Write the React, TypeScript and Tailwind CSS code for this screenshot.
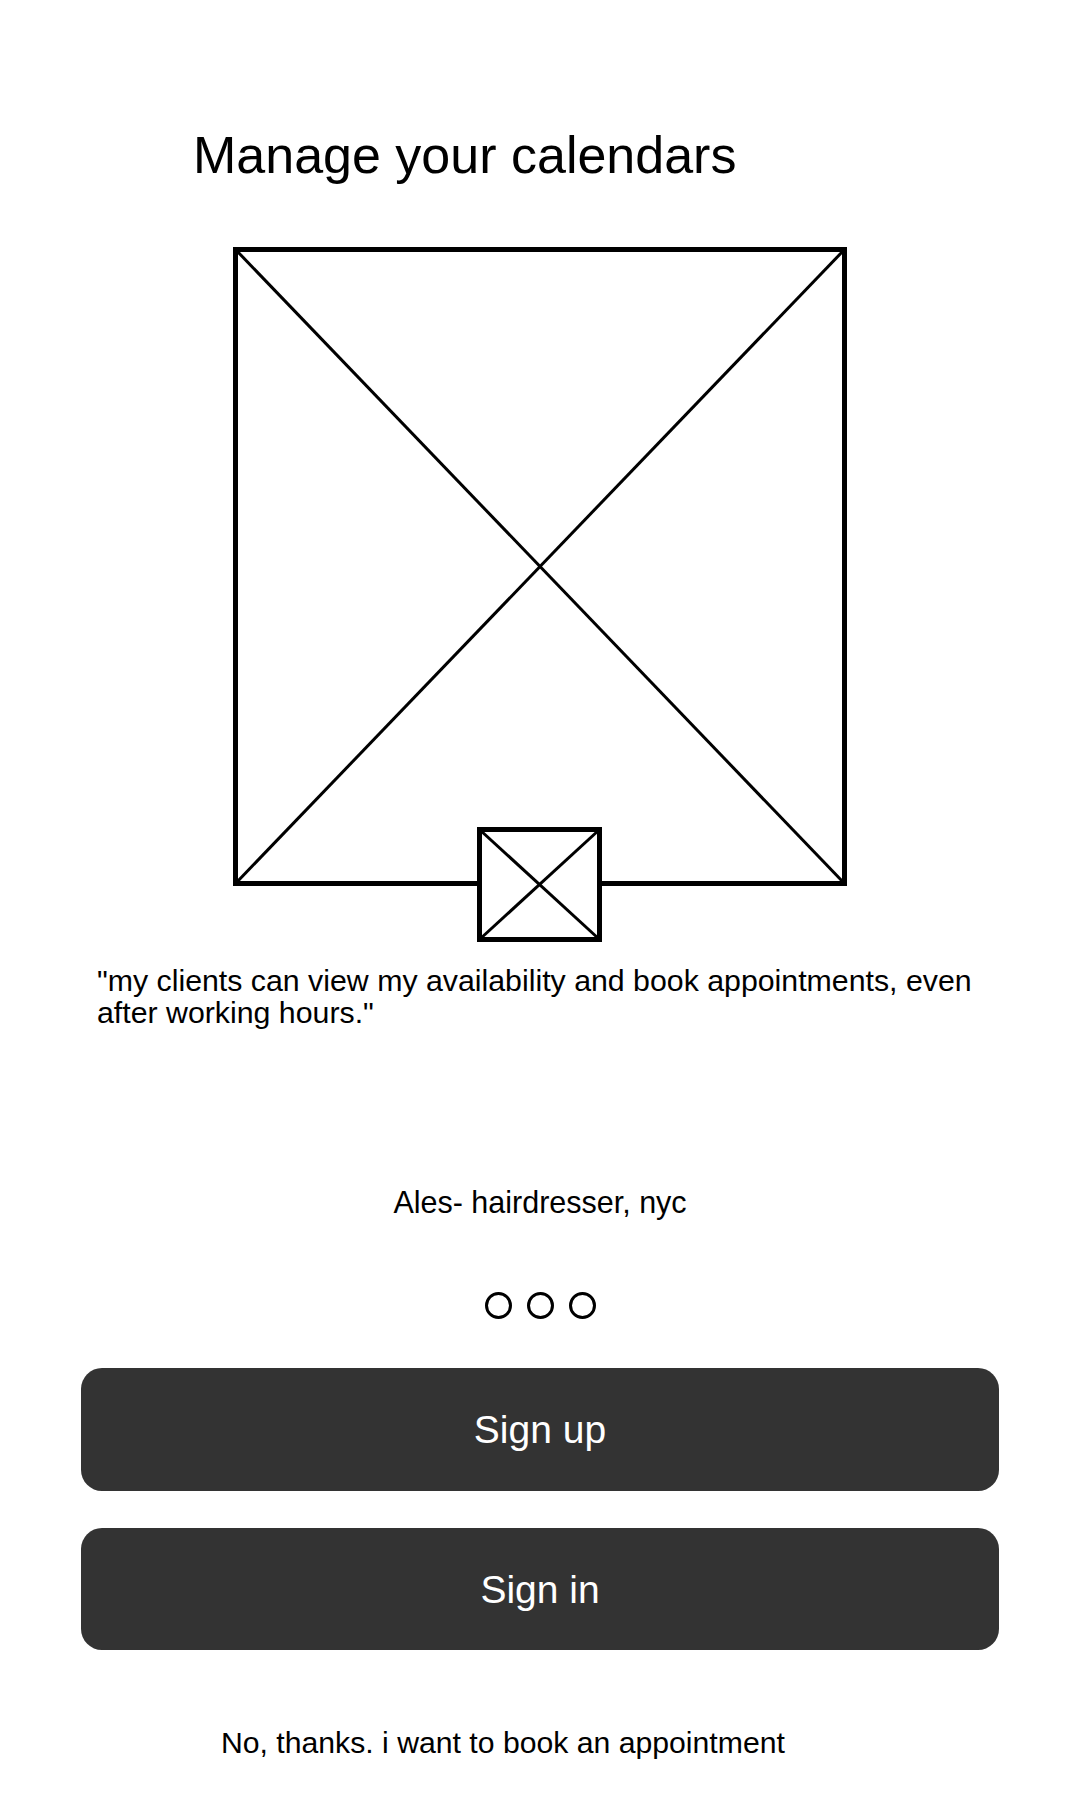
export default function App() {
  return (
    <div className="w-[1080px] h-[1800px] bg-white text-black flex flex-col font-['Liberation_Sans',Arial,sans-serif]">
      <h1 className="ml-[193px] mt-[129px] text-[52px] leading-[52px] font-normal">
        Manage your calendars
      </h1>

      {/* image placeholder */}
      <div className="relative self-center mt-[66px] w-[614px] h-[639px]">
        <svg width="614" height="639" viewBox="0 0 614 639" className="block">
          <rect x="2.5" y="2.5" width="609" height="634" fill="none" stroke="#000" strokeWidth="5" />
          <line x1="3" y1="3" x2="611" y2="636" stroke="#000" strokeWidth="3" />
          <line x1="611" y1="3" x2="3" y2="636" stroke="#000" strokeWidth="3" />
        </svg>
        <div className="absolute left-[244px] top-[580px] w-[125px] h-[115px] bg-white">
          <svg width="125" height="115" viewBox="0 0 125 115" className="block">
            <rect x="2.5" y="2.5" width="120" height="110" fill="#fff" stroke="#000" strokeWidth="5" />
            <line x1="3" y1="3" x2="122" y2="112" stroke="#000" strokeWidth="3" />
            <line x1="122" y1="3" x2="3" y2="112" stroke="#000" strokeWidth="3" />
          </svg>
        </div>
      </div>

      <p className="mt-[79px] ml-[97px] w-[890px] text-[30.3px] leading-[32px]">
        "my clients can view my availability and book appointments, even after working hours."
      </p>

      <p className="mt-[158px] text-center text-[30.5px] leading-[30px]">Ales- hairdresser, nyc</p>

      <div className="mt-[75px] flex justify-center gap-[15px]">
        <span className="w-[27px] h-[27px] rounded-full border-[3px] border-black" />
        <span className="w-[27px] h-[27px] rounded-full border-[3px] border-black" />
        <span className="w-[27px] h-[27px] rounded-full border-[3px] border-black" />
      </div>

      <button className="mt-[49px] mx-[81px] h-[123px] rounded-[21px] bg-[#333333] text-white text-[39px] leading-none">
        Sign up
      </button>
      <button className="mt-[37px] mx-[81px] h-[122px] rounded-[21px] bg-[#333333] text-white text-[39px] leading-none">
        Sign in
      </button>

      <p className="mt-[78px] ml-[221px] text-[30.2px] leading-[30px]">
        No, thanks. i want to book an appointment
      </p>
    </div>
  );
}
